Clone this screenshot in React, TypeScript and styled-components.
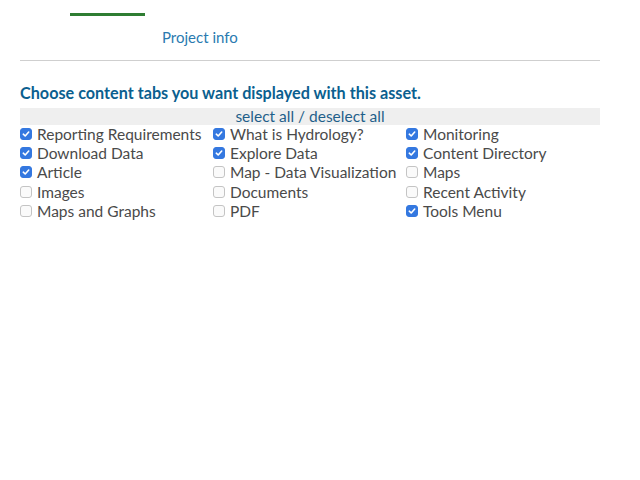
import styled, { createGlobalStyle } from "styled-components";

const GlobalStyle = createGlobalStyle`
  html, body {
    margin: 0;
    padding: 0;
    background: #ffffff;
    overflow: hidden;
  }
  body {
    font-family: Lato, "Open Sans", sans-serif;
  }
`;

const Page = styled.div`
  width: 640px;
  height: 480px;
  margin-top: -14px;
  padding: 0 40px 0 20px;
  box-sizing: border-box;
`;

const TabRow = styled.div`
  display: flex;
  padding-left: 50px;
  height: 30px;
`;

const Tab = styled.div<{ $active?: boolean; $width: number }>`
  width: ${(p) => p.$width}px;
  height: 30px;
  box-sizing: border-box;
  font-size: 14px;
  line-height: 14px;
  color: #2a7ab0;
  border-bottom: 3px solid ${(p) => (p.$active ? "#2e7d32" : "transparent")};
  text-align: center;
  white-space: nowrap;
`;

const SubTabRow = styled.div`
  display: flex;
  padding: 6px 0 8px 142px;
  height: 30px;
  align-items: center;
  border-bottom: 1px solid #cfcfcf;
`;

const SubTab = styled.a`
  font-size: 15px;
  color: #2a7ab0;
  text-decoration: none;
`;

const Heading = styled.h3`
  margin: 22px 0 6px;
  font-size: 16.2px;
  font-weight: 700;
  color: #0b5f8f;
`;

const SelectBar = styled.div`
  background: #efefef;
  text-align: center;
  font-size: 15.5px;
  line-height: 17px;
  color: #1f5f8a;
`;

const SelectLink = styled.a`
  color: #1f5f8a;
  cursor: pointer;
`;

const Grid = styled.div`
  display: grid;
  grid-template-columns: 193px 193px 193px;
  grid-auto-rows: 19.3px;
  margin-top: -1px;
`;

const Item = styled.label`
  display: flex;
  align-items: center;
  gap: 5px;
  font-size: 15.5px;
  color: #4a4a4a;
  white-space: nowrap;
`;

const Box = styled.span<{ $checked: boolean }>`
  width: 12px;
  height: 12px;
  box-sizing: border-box;
  border-radius: 3px;
  flex: none;
  display: flex;
  align-items: center;
  justify-content: center;
  background: ${(p) => (p.$checked ? "#3478e0" : "#fafafa")};
  border: 1px solid ${(p) => (p.$checked ? "#3478e0" : "#c4c4c4")};
`;

const tabs = [
  { label: "Project", width: 75, active: true },
  { label: "Reports", width: 85 },
  { label: "Documents", width: 90 },
  { label: "Background", width: 100 },
  { label: "Related content", width: 120 },
];

const items: { label: string; checked: boolean }[] = [
  { label: "Reporting Requirements", checked: true },
  { label: "What is Hydrology?", checked: true },
  { label: "Monitoring", checked: true },
  { label: "Download Data", checked: true },
  { label: "Explore Data", checked: true },
  { label: "Content Directory", checked: true },
  { label: "Article", checked: true },
  { label: "Map - Data Visualization", checked: false },
  { label: "Maps", checked: false },
  { label: "Images", checked: false },
  { label: "Documents", checked: false },
  { label: "Recent Activity", checked: false },
  { label: "Maps and Graphs", checked: false },
  { label: "PDF", checked: false },
  { label: "Tools Menu", checked: true },
];

const Check = () => (
  <svg width="8" height="8" viewBox="0 0 8 8">
    <path d="M1.3 4.2 L3.2 6 L6.7 2" fill="none" stroke="#fff" strokeWidth="1.6" strokeLinecap="round" strokeLinejoin="round" />
  </svg>
);

export default function App() {
  return (
    <>
      <GlobalStyle />
      <Page>
        <TabRow>
          {tabs.map((t) => (
            <Tab key={t.label} $active={t.active} $width={t.width}>
              {t.label}
            </Tab>
          ))}
        </TabRow>
        <SubTabRow>
          <SubTab>Project info</SubTab>
        </SubTabRow>
        <Heading>Choose content tabs you want displayed with this asset.</Heading>
        <SelectBar>
          <SelectLink>select all</SelectLink> / <SelectLink>deselect all</SelectLink>
        </SelectBar>
        <Grid>
          {items.map((it) => (
            <Item key={it.label}>
              <Box $checked={it.checked}>{it.checked && <Check />}</Box>
              {it.label}
            </Item>
          ))}
        </Grid>
      </Page>
    </>
  );
}
